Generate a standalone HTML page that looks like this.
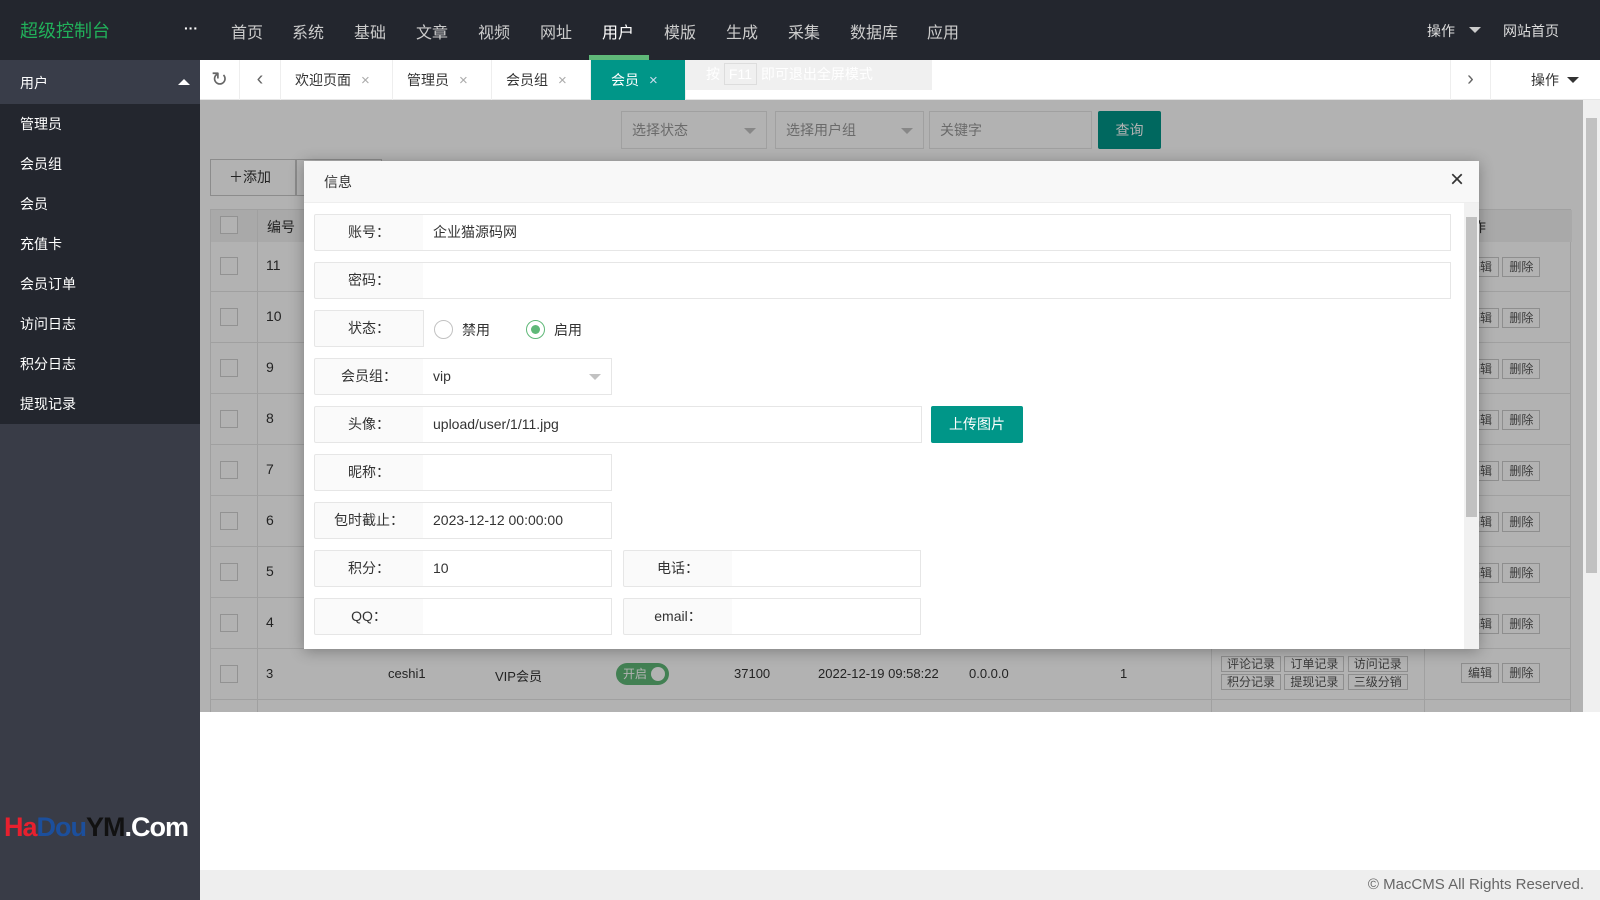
<!DOCTYPE html>
<html><head><meta charset="utf-8"><style>
*{box-sizing:border-box;margin:0;padding:0}
body{width:1600px;height:900px;overflow:hidden;position:relative;font-family:"Liberation Sans","Noto Sans CJK SC",sans-serif;font-size:14px;color:#333;background:#fff}
.abs{position:absolute}
.top{left:0;top:0;width:1600px;height:60px;background:#23262e}
.top .logo{left:20px;top:17px;color:#21b05a;font-size:18px}
.top .nav{top:19px;color:#ccc;font-size:16px}
.side{left:0;top:60px;width:200px;height:840px;background:#393c47}
.side .menu{left:0;top:44px;width:200px;height:320px;background:#23262e}
.side .it{left:20px;color:#fff;font-size:14px}
.tabs{left:200px;top:60px;width:1400px;height:40px;background:#fff;border-bottom:1px solid #e6e6e6}
.tab{top:0;height:40px;line-height:40px;font-size:14px;color:#333;border-right:1px solid #eee;padding-left:14px}
.tab .x{color:#aaa;margin-left:10px;font-size:15px}
.content{left:200px;top:100px;width:1400px;height:612px;background:#fff;overflow:hidden}
.sel{height:38px;border:1px solid #e6e6e6;background:#fff;color:#999;line-height:36px;padding-left:10px}
.tri{position:absolute;right:10px;top:16px;border:6px solid transparent;border-top-color:#c2c2c2;border-bottom:0}
table{border-collapse:collapse}
.shade{left:200px;top:100px;width:1383px;height:612px;background:rgba(0,0,0,.3)}
.modal{left:304px;top:161px;width:1175px;height:488px;background:#fff;box-shadow:0 2px 14px rgba(0,0,0,.3)}
.mh{left:0;top:0;width:1175px;height:42px;background:#f8f8f8;border-bottom:1px solid #eee}
.lab{height:37px;border:1px solid #e6e6e6;background:#fafafa;text-align:center;line-height:35px;width:110px;border-radius:2px 0 0 2px}
.inp{height:37px;border:1px solid #e6e6e6;border-left:0;background:#fff;line-height:35px;padding-left:10px}
.footer{left:200px;top:870px;width:1400px;height:30px;background:#eee;text-align:right;line-height:30px;color:#666;padding-right:16px;font-size:15px}
</style></head><body>
<div class="abs top">
 <div class="abs logo">超级控制台</div>
 <div class="abs" style="left:184px;top:20px;color:#fff;font-weight:bold">···</div>
 <div class="abs nav" style="left:231px">首页</div>
 <div class="abs nav" style="left:292px">系统</div>
 <div class="abs nav" style="left:354px">基础</div>
 <div class="abs nav" style="left:416px">文章</div>
 <div class="abs nav" style="left:478px">视频</div>
 <div class="abs nav" style="left:540px">网址</div>
 <div class="abs nav" style="left:602px;color:#fff">用户</div>
 <div class="abs nav" style="left:664px">模版</div>
 <div class="abs nav" style="left:726px">生成</div>
 <div class="abs nav" style="left:788px">采集</div>
 <div class="abs nav" style="left:850px">数据库</div>
 <div class="abs nav" style="left:927px">应用</div>
 <div class="abs" style="left:589px;top:55px;width:60px;height:5px;background:#5fb878"></div>
 <div class="abs" style="left:1427px;top:21px;color:#ddd">操作</div>
 <div class="abs" style="left:1469px;top:27px;border:6px solid transparent;border-top-color:#ccc;border-bottom:0"></div>
 <div class="abs" style="left:1503px;top:21px;color:#ddd">网站首页</div>
</div>
<div class="abs side">
 <div class="abs" style="left:0;top:0;width:200px;height:44px;background:#393d49"></div>
 <div class="abs it" style="top:13px">用户</div>
 <div class="abs" style="left:178px;top:19px;border:6px solid transparent;border-bottom-color:#fff;border-top:0"></div>
 <div class="abs menu"></div>
 <div class="abs it" style="top:54px">管理员</div>
 <div class="abs it" style="top:94px">会员组</div>
 <div class="abs it" style="top:134px">会员</div>
 <div class="abs it" style="top:174px">充值卡</div>
 <div class="abs it" style="top:214px">会员订单</div>
 <div class="abs it" style="top:254px">访问日志</div>
 <div class="abs it" style="top:294px">积分日志</div>
 <div class="abs it" style="top:334px">提现记录</div>
 <div class="abs" style="left:4px;top:752px;font-size:27px;font-weight:bold;letter-spacing:-1px"><span style="color:#e8202e">Ha</span><span style="color:#1c4f9c">Dou</span><span style="color:#111">YM</span><span style="color:#fff">.Com</span></div>
</div>
<div class="abs tabs">
 <div class="abs" style="left:0;top:0;width:40px;height:40px;border-right:1px solid #eee;text-align:center;line-height:40px;font-size:20px;color:#666">&#x21bb;</div>
 <div class="abs" style="left:40px;top:0;width:41px;height:40px;border-right:1px solid #eee;text-align:center;line-height:38px;font-size:20px;color:#666">&#x2039;</div>
 <div class="abs tab" style="left:81px;width:112px">欢迎页面<span class="x">×</span></div>
 <div class="abs tab" style="left:193px;width:99px">管理员<span class="x">×</span></div>
 <div class="abs tab" style="left:292px;width:99px">会员组<span class="x">×</span></div>
 <div class="abs tab" style="left:391px;width:95px;background:#009688;color:#fff;padding-left:20px">会员<span class="x" style="color:#cde">×</span></div>
 <div class="abs" style="left:486px;top:0;width:246px;height:30px;background:#f0f0f0;color:#fff;line-height:28px;padding-left:20px;font-size:14px">按 <span style="border:1px solid #ddd;padding:2px 4px">F11</span> 即可退出全屏模式</div>
 <div class="abs" style="left:1250px;top:0;width:40px;height:40px;border-left:1px solid #eee;text-align:center;line-height:38px;font-size:20px;color:#666">&#x203a;</div>
 <div class="abs" style="left:1290px;top:0;width:110px;height:40px;border-left:1px solid #eee;line-height:40px;padding-left:40px">操作</div>
 <div class="abs" style="left:1367px;top:17px;border:6px solid transparent;border-top-color:#333;border-bottom:0"></div>
</div>
<div class="abs content">
 <div class="abs sel" style="left:421px;top:11px;width:146px">选择状态<i class="tri"></i></div>
 <div class="abs sel" style="left:575px;top:11px;width:149px">选择用户组<i class="tri"></i></div>
 <div class="abs sel" style="left:729px;top:11px;width:163px">关键字</div>
 <div class="abs" style="left:898px;top:11px;width:63px;height:38px;background:#009688;color:#fff;text-align:center;line-height:38px;border-radius:2px">查询</div>
 <div class="abs" style="left:10px;top:59px;width:86px;height:37px;border:1px solid #c9c9c9;background:#fff;line-height:35px;padding-left:18px">＋添加</div>
 <div class="abs" style="left:96px;top:59px;width:86px;height:37px;border:1px solid #c9c9c9;background:#fff"></div>
 <div class="abs" style="left:10px;top:109px;width:1361px;height:510px;border:1px solid #e6e6e6;background:#fff">
  <div class="abs" style="left:0;top:0;width:1361px;height:32px;background:#f2f2f2"></div>
  <div class="abs" style="left:46px;top:0;width:1px;height:510px;background:#e6e6e6"></div>
  <div class="abs" style="left:56px;top:7px">编号</div>
  <div class="abs" style="left:1000px;top:0;width:1px;height:510px;background:#e6e6e6"></div>
  <div class="abs" style="left:1213px;top:0;width:1px;height:510px;background:#e6e6e6"></div>
  <div class="abs" style="left:1247px;top:7px">操作</div>
 </div>
 <div class="abs" style="left:10px;top:109px" id="rows"></div>
</div>
<div class="abs" style="left:210px;top:242px;width:1361px">
 <div style="position:relative">
 </div>
</div>
<!-- table rows -->
<div class="abs" style="left:210px;top:241px;width:1361px;height:471px;overflow:hidden">
 <div style="position:absolute;left:0;top:0;width:1361px">
  <div style="height:51px;border-bottom:1px solid #e6e6e6;position:relative"><span class="abs" style="left:56px;top:16px">11</span></div>
  <div style="height:51px;border-bottom:1px solid #e6e6e6;position:relative"><span class="abs" style="left:56px;top:16px">10</span></div>
  <div style="height:51px;border-bottom:1px solid #e6e6e6;position:relative"><span class="abs" style="left:56px;top:16px">9</span></div>
  <div style="height:51px;border-bottom:1px solid #e6e6e6;position:relative"><span class="abs" style="left:56px;top:16px">8</span></div>
  <div style="height:51px;border-bottom:1px solid #e6e6e6;position:relative"><span class="abs" style="left:56px;top:16px">7</span></div>
  <div style="height:51px;border-bottom:1px solid #e6e6e6;position:relative"><span class="abs" style="left:56px;top:16px">6</span></div>
  <div style="height:51px;border-bottom:1px solid #e6e6e6;position:relative"><span class="abs" style="left:56px;top:16px">5</span></div>
  <div style="height:51px;border-bottom:1px solid #e6e6e6;position:relative"><span class="abs" style="left:56px;top:16px">4</span></div>
  <div style="height:51px;border-bottom:1px solid #e6e6e6;position:relative;font-size:13px">
   <span class="abs" style="left:56px;top:17px">3</span>
   <span class="abs" style="left:178px;top:17px">ceshi1</span>
   <span class="abs" style="left:285px;top:17px">VIP会员</span>
   <span class="abs" style="left:406px;top:14px;width:53px;height:22px;border-radius:11px;background:#5fb878;color:#fff;font-size:12px;line-height:22px;padding-left:7px">开启<i style="position:absolute;right:4px;top:4px;width:14px;height:14px;border-radius:50%;background:#fff"></i></span>
   <span class="abs" style="left:524px;top:17px">37100</span>
   <span class="abs" style="left:608px;top:17px">2022-12-19 09:58:22</span>
   <span class="abs" style="left:759px;top:17px">0.0.0.0</span>
   <span class="abs" style="left:910px;top:17px">1</span>
   <span class="abs" style="left:1011px;top:6px;font-size:12px;line-height:18px;color:#555">
    <span style="border:1px solid #ccc;padding:0 5px">评论记录</span> <span style="border:1px solid #ccc;padding:0 5px">订单记录</span> <span style="border:1px solid #ccc;padding:0 5px">访问记录</span><br>
    <span style="border:1px solid #ccc;padding:0 5px">积分记录</span> <span style="border:1px solid #ccc;padding:0 5px">提现记录</span> <span style="border:1px solid #ccc;padding:0 5px">三级分销</span></span>
   <span class="abs" style="left:1251px;top:15px;font-size:12px;color:#555"><span style="border:1px solid #ccc;padding:2px 6px">编辑</span> <span style="border:1px solid #ccc;padding:2px 6px">删除</span></span>
  </div>
 </div>
 <div class="abs" style="left:10px;top:0;width:26px;height:471px">
 </div>
</div>
<div class="abs" style="left:220px;top:216px;width:18px;height:18px;border:1px solid #d2d2d2;background:#fff"></div>
<div class="abs" style="left:220px;top:257px;width:18px;height:18px;border:1px solid #d2d2d2;background:#fff"></div>
<div class="abs" style="left:220px;top:308px;width:18px;height:18px;border:1px solid #d2d2d2;background:#fff"></div>
<div class="abs" style="left:220px;top:359px;width:18px;height:18px;border:1px solid #d2d2d2;background:#fff"></div>
<div class="abs" style="left:220px;top:410px;width:18px;height:18px;border:1px solid #d2d2d2;background:#fff"></div>
<div class="abs" style="left:220px;top:461px;width:18px;height:18px;border:1px solid #d2d2d2;background:#fff"></div>
<div class="abs" style="left:220px;top:512px;width:18px;height:18px;border:1px solid #d2d2d2;background:#fff"></div>
<div class="abs" style="left:220px;top:563px;width:18px;height:18px;border:1px solid #d2d2d2;background:#fff"></div>
<div class="abs" style="left:220px;top:614px;width:18px;height:18px;border:1px solid #d2d2d2;background:#fff"></div>
<div class="abs" style="left:220px;top:665px;width:18px;height:18px;border:1px solid #d2d2d2;background:#fff"></div>
<div class="abs" style="left:1461px;top:258px;font-size:12px;color:#555"><span style="border:1px solid #ccc;padding:2px 6px">编辑</span> <span style="border:1px solid #ccc;padding:2px 6px">删除</span></div>
<div class="abs" style="left:1461px;top:309px;font-size:12px;color:#555"><span style="border:1px solid #ccc;padding:2px 6px">编辑</span> <span style="border:1px solid #ccc;padding:2px 6px">删除</span></div>
<div class="abs" style="left:1461px;top:360px;font-size:12px;color:#555"><span style="border:1px solid #ccc;padding:2px 6px">编辑</span> <span style="border:1px solid #ccc;padding:2px 6px">删除</span></div>
<div class="abs" style="left:1461px;top:411px;font-size:12px;color:#555"><span style="border:1px solid #ccc;padding:2px 6px">编辑</span> <span style="border:1px solid #ccc;padding:2px 6px">删除</span></div>
<div class="abs" style="left:1461px;top:462px;font-size:12px;color:#555"><span style="border:1px solid #ccc;padding:2px 6px">编辑</span> <span style="border:1px solid #ccc;padding:2px 6px">删除</span></div>
<div class="abs" style="left:1461px;top:513px;font-size:12px;color:#555"><span style="border:1px solid #ccc;padding:2px 6px">编辑</span> <span style="border:1px solid #ccc;padding:2px 6px">删除</span></div>
<div class="abs" style="left:1461px;top:564px;font-size:12px;color:#555"><span style="border:1px solid #ccc;padding:2px 6px">编辑</span> <span style="border:1px solid #ccc;padding:2px 6px">删除</span></div>
<div class="abs" style="left:1461px;top:615px;font-size:12px;color:#555"><span style="border:1px solid #ccc;padding:2px 6px">编辑</span> <span style="border:1px solid #ccc;padding:2px 6px">删除</span></div>
<!-- page scrollbar -->
<div class="abs" style="left:1583px;top:100px;width:17px;height:612px;background:#f0f0f0"></div>
<div class="abs" style="left:1586px;top:118px;width:11px;height:455px;background:#c1c1c1"></div>
<div class="abs shade"></div>
<div class="abs modal">
 <div class="abs mh"><span class="abs" style="left:20px;top:11px">信息</span><span class="abs" style="left:1146px;top:5px;font-size:24px;color:#333">×</span></div>
 <div class="abs" style="left:1160px;top:42px;width:15px;height:446px;background:#f1f1f1"></div>
 <div class="abs" style="left:1162px;top:56px;width:11px;height:300px;background:#c1c1c1"></div>
 <div class="abs lab" style="left:10px;top:53px">账号：</div><div class="abs inp" style="left:119px;top:53px;width:1028px">企业猫源码网</div>
 <div class="abs lab" style="left:10px;top:101px">密码：</div><div class="abs inp" style="left:119px;top:101px;width:1028px"></div>
 <div class="abs lab" style="left:10px;top:149px">状态：</div>
 <div class="abs" style="left:130px;top:159px;width:19px;height:19px;border:1px solid #c2c2c2;border-radius:50%"></div>
 <div class="abs" style="left:158px;top:159px">禁用</div>
 <div class="abs" style="left:222px;top:159px;width:19px;height:19px;border:1px solid #5fb878;border-radius:50%"><i style="position:absolute;left:4px;top:4px;width:9px;height:9px;border-radius:50%;background:#5fb878"></i></div>
 <div class="abs" style="left:250px;top:159px">启用</div>
 <div class="abs lab" style="left:10px;top:197px">会员组：</div><div class="abs inp" style="left:119px;top:197px;width:189px">vip<i class="tri" style="top:15px"></i></div>
 <div class="abs lab" style="left:10px;top:245px">头像：</div><div class="abs inp" style="left:119px;top:245px;width:499px">upload/user/1/11.jpg</div>
 <div class="abs" style="left:627px;top:245px;width:92px;height:37px;background:#009688;color:#fff;text-align:center;line-height:37px;border-radius:2px">上传图片</div>
 <div class="abs lab" style="left:10px;top:293px">昵称：</div><div class="abs inp" style="left:119px;top:293px;width:189px"></div>
 <div class="abs lab" style="left:10px;top:341px">包时截止：</div><div class="abs inp" style="left:119px;top:341px;width:189px">2023-12-12 00:00:00</div>
 <div class="abs lab" style="left:10px;top:389px">积分：</div><div class="abs inp" style="left:119px;top:389px;width:189px">10</div>
 <div class="abs lab" style="left:319px;top:389px">电话：</div><div class="abs inp" style="left:428px;top:389px;width:189px"></div>
 <div class="abs lab" style="left:10px;top:437px">QQ：</div><div class="abs inp" style="left:119px;top:437px;width:189px"></div>
 <div class="abs lab" style="left:319px;top:437px">email：</div><div class="abs inp" style="left:428px;top:437px;width:189px"></div>
</div>
<div class="abs footer">© MacCMS All Rights Reserved.</div>
</body></html>
